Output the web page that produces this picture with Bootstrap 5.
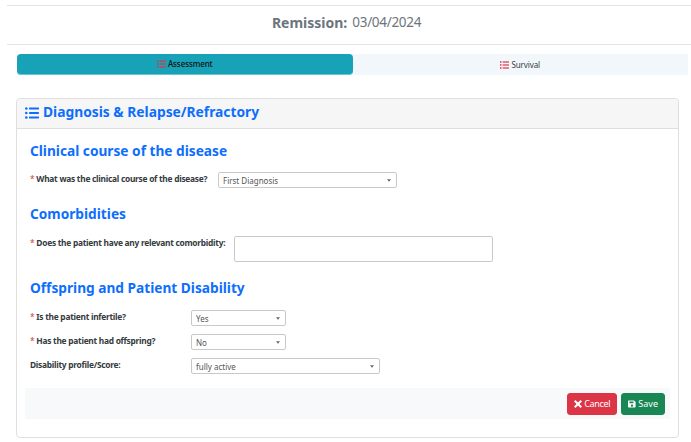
<!DOCTYPE html>
<html lang="en">
<head>
<meta charset="utf-8">
<title>Remission</title>
<link href="https://cdn.jsdelivr.net/npm/bootstrap@5.3.0/dist/css/bootstrap.min.css" rel="stylesheet">
<style>
html,body{height:442px;overflow:hidden}
body{font-family:"Noto Sans","Open Sans",sans-serif;background:#fff;color:#212529;font-size:8px}
.page-wrap{padding:5px 0 0 7px}
.title-bar{height:40px;border-top:1.5px solid #e4e4e4;border-bottom:1.5px solid #e4e4e4;display:flex;align-items:center;justify-content:center;color:#6c757d;font-size:13.5px;letter-spacing:-.3px;line-height:1;padding:0 5px 5px 0}
.title-bar b{margin-right:5px;font-size:14px;letter-spacing:0}
.tab-row{margin:9px 3px 0 10px;display:flex;height:21px;background:#f2f7fb}
.tab-item{flex:1 1 0;display:flex;align-items:center;justify-content:center;gap:2px;font-size:8px;color:#343a40;letter-spacing:-.1px}
.tab-on{background:#17a2b8;border-radius:4px;color:#111;font-weight:500;border-bottom:1px solid #6cc4d2}
.tab-icon{width:9px;height:8px;color:#dc3545}
.form-card{margin:23px 12px 0 9px;height:340px;border:1px solid #dfdfdf;border-radius:4px}
.form-head{height:30px;background:#f6f6f6;border-bottom:1px solid #dfdfdf;display:flex;align-items:center;gap:4px;padding:0 8px 2px;color:#0d6efd;font-size:13.8px;font-weight:700;border-radius:4px 4px 0 0}
.head-icon{width:14px;height:12px}
.form-inner{padding:13px 8px 0 8px}
.sect-title{color:#0d6efd;font-size:13.7px;font-weight:700;line-height:18px;margin:0 0 0 5px}
.field{display:flex;align-items:flex-start;font-size:8.4px;letter-spacing:-.27px;font-weight:700;color:#343a40;margin-left:5px;white-space:nowrap}
.req{color:#dc3545;font-weight:400;margin-right:2px}
.fld-label{line-height:12px;padding-top:1px}
.pick{display:block;height:16px;padding:0 6px 0 4px;font-size:8px;letter-spacing:0;line-height:13px;color:#555;border:1px solid #c9c9c9;border-radius:2px;background:#fff url("data:image/svg+xml,%3Csvg xmlns='http://www.w3.org/2000/svg' viewBox='0 0 6 4'%3E%3Cpath fill='%23666' d='M0 0h6L3 4z'/%3E%3C/svg%3E") no-repeat right 5px center/4px 3px;appearance:none;box-shadow:none;font-family:inherit;font-weight:400}
.fld-a{margin-top:12px}.fld-a .fld-label{width:188px}.fld-a .pick{width:179px}
.fld-b{margin-top:13px}.fld-b .fld-label{width:204px}
.note-box{width:259px;height:26px;border:1px solid #c9c9c9;border-radius:2px;background:#fff;resize:none;display:block;padding:2px}
.fld-c{height:16px;margin-bottom:8px}.fld-c .fld-label{width:161px}
.w-short{width:95px!important}.w-long{width:189px!important}
.sect-b{margin-top:17px}.sect-c{margin-top:17px;margin-bottom:13px}
.foot-bar{margin-top:14px;height:31px;background:#f8f9fa;display:flex;align-items:center;justify-content:flex-end;gap:4px;padding:0 5px 0 0}
.act-btn{height:22px;padding:0 6px;font-size:9px;line-height:1;display:flex;align-items:center;gap:2px;border-radius:3px}
.btn-danger.act-btn{letter-spacing:-.3px}
.act-icon{width:8px;height:8px;fill:currentColor}
</style>
</head>
<body>
<div class="page-wrap">
  <div class="title-bar"><b>Remission:</b> 03/04/2024</div>
  <div class="tab-row">
    <div class="tab-item tab-on"><svg class="tab-icon" viewBox="0 0 12 10" fill="currentColor"><rect x="0" y="0" width="2" height="2"/><rect x="0" y="4" width="2" height="2"/><rect x="0" y="8" width="2" height="2"/><rect x="3.5" y=".2" width="8.5" height="1.6"/><rect x="3.5" y="4.2" width="8.5" height="1.6"/><rect x="3.5" y="8.2" width="8.5" height="1.6"/></svg>Assessment</div>
    <div class="tab-item"><svg class="tab-icon" viewBox="0 0 12 10" fill="currentColor"><rect x="0" y="0" width="2" height="2"/><rect x="0" y="4" width="2" height="2"/><rect x="0" y="8" width="2" height="2"/><rect x="3.5" y=".2" width="8.5" height="1.6"/><rect x="3.5" y="4.2" width="8.5" height="1.6"/><rect x="3.5" y="8.2" width="8.5" height="1.6"/></svg>Survival</div>
  </div>
  <div class="form-card">
    <div class="form-head"><svg class="head-icon" viewBox="0 0 14 12" fill="currentColor"><circle cx="1.3" cy="1.5" r="1.3"/><circle cx="1.3" cy="6" r="1.3"/><circle cx="1.3" cy="10.5" r="1.3"/><rect x="4" y=".6" width="10" height="1.8" rx=".4"/><rect x="4" y="5.1" width="10" height="1.8" rx=".4"/><rect x="4" y="9.6" width="10" height="1.8" rx=".4"/></svg>Diagnosis &amp; Relapse/Refractory</div>
    <div class="form-inner">
      <h5 class="sect-title">Clinical course of the disease</h5>
      <div class="field fld-a"><div class="fld-label"><span class="req">*</span>What was the clinical course of the disease?</div><select class="pick"><option>First Diagnosis</option></select></div>
      <h5 class="sect-title sect-b">Comorbidities</h5>
      <div class="field fld-b"><div class="fld-label"><span class="req">*</span>Does the patient have any relevant comorbidity:</div><textarea class="note-box"></textarea></div>
      <h5 class="sect-title sect-c">Offspring and Patient Disability</h5>
      <div class="field fld-c"><div class="fld-label"><span class="req">*</span>Is the patient infertile?</div><select class="pick w-short"><option>Yes</option></select></div>
      <div class="field fld-c"><div class="fld-label"><span class="req">*</span>Has the patient had offspring?</div><select class="pick w-short"><option>No</option></select></div>
      <div class="field fld-c"><div class="fld-label">Disability profile/Score:</div><select class="pick w-long"><option>fully active</option></select></div>
      <div class="foot-bar">
        <button type="button" class="btn btn-danger act-btn"><svg class="act-icon" viewBox="0 0 10 10"><path d="M1.8 0 5 3.2 8.2 0 10 1.8 6.8 5 10 8.2 8.2 10 5 6.8 1.800 10 0 8.200 3.200 5 0 1.800z"/></svg>Cancel</button>
        <button type="button" class="btn btn-success act-btn"><svg class="act-icon" viewBox="0 0 10 10"><path fill-rule="evenodd" d="M1 .5h6.500L9.500 2.500V8.500a1 1 0 0 1-1 1H1a1 1 0 0 1-1-1V1.500a1 1 0 0 1 1-1zM1.800 1.800v2.200h5V1.800zM5 5.500a1.500 1.500 0 1 0 0 3 1.500 1.500 0 0 0 0-3z"/></svg>Save</button>
      </div>
    </div>
  </div>
</div>
<script src="https://cdn.jsdelivr.net/npm/bootstrap@5.3.0/dist/js/bootstrap.bundle.min.js"></script>
</body>
</html>
